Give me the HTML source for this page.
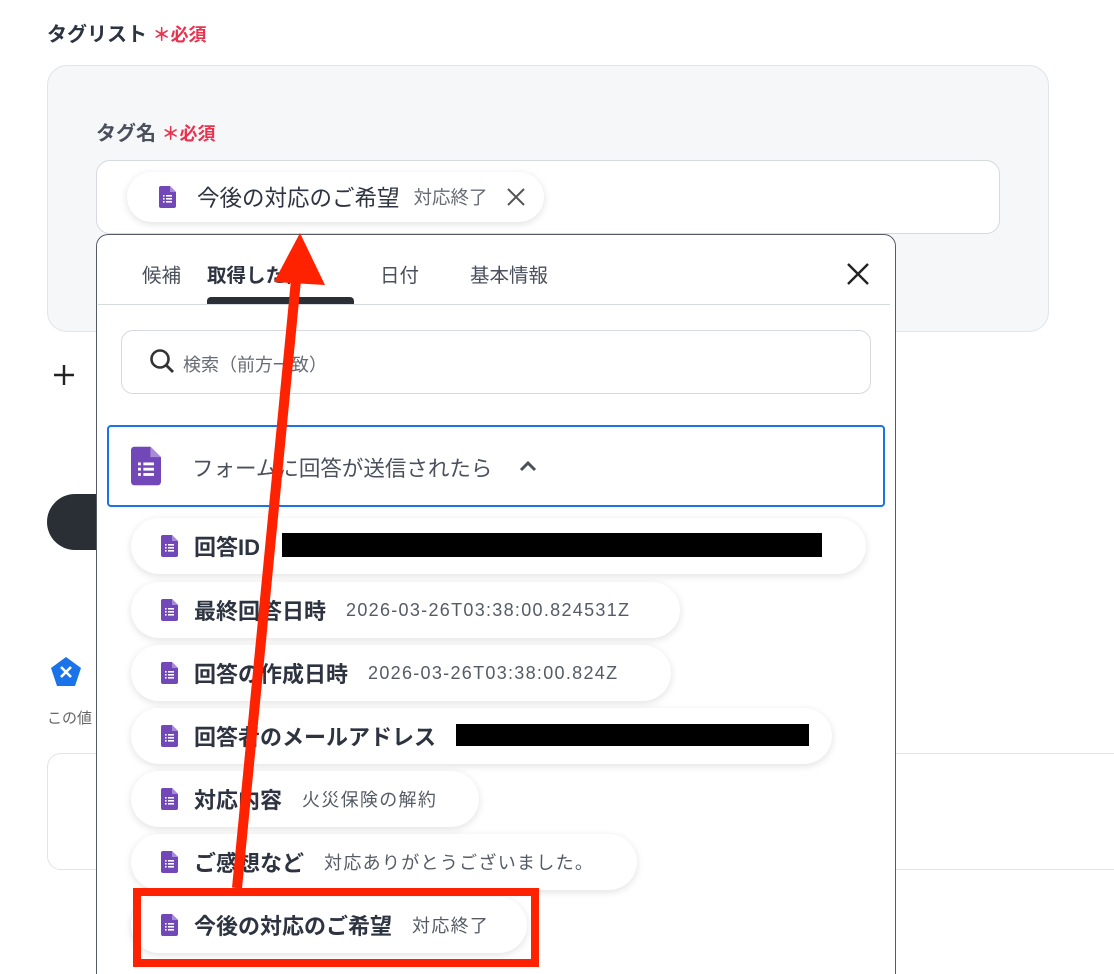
<!DOCTYPE html>
<html><head><meta charset="utf-8"><style>
*{box-sizing:border-box;margin:0;padding:0}
html,body{width:1114px;height:974px;overflow:hidden}
body{background:#fff;font-family:"Liberation Sans","Noto Sans CJK JP",sans-serif;color:#2d3340;position:relative}
.a{position:absolute}
.req{color:#e8334f;font-size:18px;font-weight:bold}
.chip{position:absolute;left:131px;height:56px;border-radius:28px;background:#fff;box-shadow:0 2px 8px rgba(0,0,0,.12);display:flex;align-items:center;padding-left:30px;padding-right:30px;white-space:nowrap}
.chip b{font-size:22px;color:#2d3340;margin-left:16px}
.chip span{font-size:18px;color:#555b66;margin-left:20px;letter-spacing:1.3px}
.ic{width:17px;height:22px;flex:none}
</style></head><body>
<svg width="0" height="0" style="position:absolute"><defs><symbol id="g" viewBox="0 0 17 22"><path d="M2 0h9l6 6v14a2 2 0 0 1-2 2H2a2 2 0 0 1-2-2V2a2 2 0 0 1 2-2z" fill="#7248b9"/><path d="M11 0l6 6h-6z" fill="#a88bd8"/><g fill="#fff"><rect x="4" y="9" width="1.6" height="1.6"/><rect x="7" y="9" width="6" height="1.6"/><rect x="4" y="12" width="1.6" height="1.6"/><rect x="7" y="12" width="6" height="1.6"/><rect x="4" y="15" width="1.6" height="1.6"/><rect x="7" y="15" width="6" height="1.6"/></g></symbol></defs></svg>

<div class="a" style="left:47px;top:18px;font-size:20px;font-weight:bold">タグリスト <span class="req">＊必須</span></div>
<div class="a" style="left:47px;top:65px;width:1002px;height:267px;background:#f6f7f9;border:1px solid #e1e4e8;border-radius:20px"></div>
<div class="a" style="left:96px;top:117px;font-size:20px;font-weight:bold;color:#4a505c">タグ名 <span class="req">＊必須</span></div>
<div class="a" style="left:96px;top:160px;width:904px;height:74px;background:#fff;border:1px solid #d6d9de;border-radius:14px"></div>
<div class="a" style="left:127px;top:172px;height:50px;width:417px;border-radius:25px;background:#fff;box-shadow:0 2px 8px rgba(0,0,0,.12);display:flex;align-items:center;padding-left:32px;white-space:nowrap">
<svg class="ic"><use href="#g"/></svg><span style="font-size:22.5px;margin-left:21px;color:#2d3340">今後の対応のご希望</span><span style="font-size:18.5px;margin-left:14px;color:#666b75">対応終了</span>
<svg width="20" height="20" style="margin-left:18px" viewBox="0 0 20 20"><path d="M2 2L18 18M18 2L2 18" stroke="#555" stroke-width="2"/></svg></div>

<svg class="a" style="left:52px;top:363px" width="24" height="24" viewBox="0 0 24 24"><path d="M12 2V22M2 12H22" stroke="#222" stroke-width="2.4"/></svg>
<div class="a" style="left:47px;top:494px;width:80px;height:56px;background:#2a2e35;border-radius:28px"></div>
<svg class="a" style="left:50px;top:656px" width="32" height="32" viewBox="0 0 32 32"><path d="M16 1L31 12L25 30H7L1 12Z" fill="#1a73e8"/><path d="M11 11l10 10M21 11L11 21" stroke="#fff" stroke-width="2.6"/></svg>
<div class="a" style="left:47px;top:707px;font-size:15px;color:#666">この値</div>
<div class="a" style="left:47px;top:753px;width:1100px;height:117px;border:1px solid #e1e4e8;border-radius:14px"></div>

<div class="a" style="left:96px;top:234px;width:800px;height:740px;background:#fff;border:1px solid #555b66;border-bottom:none;border-radius:12px 12px 0 0"></div>
<div class="a" style="left:142px;top:259px;font-size:19.5px;color:#4a505c">候補</div>
<div class="a" style="left:207px;top:259px;font-size:19.5px;font-weight:bold;color:#2d3340">取得した値</div>
<div class="a" style="left:380px;top:259px;font-size:19.5px;color:#4a505c">日付</div>
<div class="a" style="left:470px;top:259px;font-size:19.5px;color:#4a505c">基本情報</div>
<div class="a" style="left:207px;top:297px;width:147px;height:8px;background:#2a2e35;border-radius:4px 4px 0 0"></div>
<div class="a" style="left:98px;top:304px;width:792px;height:1px;background:#d6d9de"></div>
<svg class="a" style="left:846px;top:262px" width="24" height="24" viewBox="0 0 24 24"><path d="M2 2L22 22M22 2L2 22" stroke="#222" stroke-width="2.4"/></svg>
<div class="a" style="left:121px;top:330px;width:750px;height:64px;border:1px solid #d6d9de;border-radius:12px"></div>
<svg class="a" style="left:149px;top:348px" width="28" height="28" viewBox="0 0 28 28"><circle cx="11" cy="11" r="8.5" fill="none" stroke="#333" stroke-width="2.6"/><path d="M17 17l7 7" stroke="#333" stroke-width="2.8"/></svg>
<div class="a" style="left:183px;top:351px;font-size:18px;color:#666b75">検索（前方一致）</div>
<div class="a" style="left:107px;top:425px;width:778px;height:82px;border:2px solid #1a73e8;border-radius:4px"></div>
<svg class="a" style="left:131px;top:446px;width:30px;height:40px" viewBox="0 0 17 22"><use href="#g"/></svg>
<div class="a" style="left:192px;top:452px;font-size:21.5px;color:#4a505c;white-space:nowrap">フォームに回答が送信されたら</div>
<svg class="a" style="left:518px;top:459px" width="20" height="14" viewBox="0 0 20 14"><path d="M3 11L10 4L17 11" fill="none" stroke="#4a505c" stroke-width="3"/></svg>

<div class="chip" style="top:518px;width:735px"><svg class="ic"><use href="#g"/></svg><b>回答ID</b></div>
<div class="a" style="left:282px;top:533px;width:540px;height:24px;background:#000"></div>
<div class="chip" style="top:582px;width:549px"><svg class="ic"><use href="#g"/></svg><b>最終回答日時</b><span>2026-03-26T03:38:00.824531Z</span></div>
<div class="chip" style="top:645px;width:540px"><svg class="ic"><use href="#g"/></svg><b>回答の作成日時</b><span>2026-03-26T03:38:00.824Z</span></div>
<div class="chip" style="top:708px;width:701px"><svg class="ic"><use href="#g"/></svg><b>回答者のメールアドレス</b></div>
<div class="a" style="left:456px;top:724px;width:353px;height:22px;background:#000"></div>
<div class="chip" style="top:771px;width:348px"><svg class="ic"><use href="#g"/></svg><b>対応内容</b><span>火災保険の解約</span></div>
<div class="chip" style="top:834px;width:506px"><svg class="ic"><use href="#g"/></svg><b>ご感想など</b><span>対応ありがとうございました。</span></div>
<div class="chip" style="top:897px;width:396px"><svg class="ic"><use href="#g"/></svg><b>今後の対応のご希望</b><span>対応終了</span></div>
<div class="a" style="left:133px;top:888px;width:406px;height:79px;border:8px solid #ff2200"></div>

<svg class="a" style="left:0;top:0" width="1114" height="974"><line x1="237" y1="888" x2="296" y2="280" stroke="#ff2200" stroke-width="10"/><path d="M300 233L325 285L274 282Z" fill="#ff2200"/></svg>
</body></html>
